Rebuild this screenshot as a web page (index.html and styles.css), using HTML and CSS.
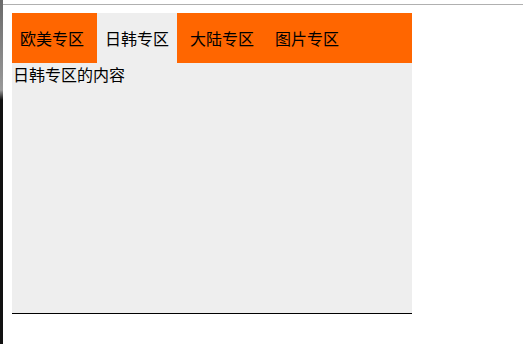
FILE: index.html
```html
<!DOCTYPE html>
<html lang="zh-CN">
<head>
<meta charset="utf-8">
<title>Tabs</title>
<link rel="stylesheet" href="styles.css">
</head>
<body>
<div class="frame">
  <div class="tabs">
    <ul class="tab-list">
      <li class="tab">欧美专区</li>
      <li class="tab active">日韩专区</li>
      <li class="tab">大陆专区</li>
      <li class="tab">图片专区</li>
    </ul>
    <div class="panel">日韩专区的内容</div>
  </div>
</div>
</body>
</html>
```

FILE: styles.css
```css
html {
  height: 100%;
  background:
    linear-gradient(to bottom, #6a6a6a 0, #9a9a9a 90px, #111 100px, #111 100%) left top / 3px 100% no-repeat,
    #fff;
}
body {
  margin: 0;
  padding: 4px 0 0 3px;
  font-family: "Noto Sans CJK SC", "Noto Sans", sans-serif;
  font-size: 16px;
  color: #000;
}
.frame {
  border-top: 1px solid #b0b0b0;
  padding: 8px 0 0 9px;
}
.tabs {
  width: 400px;
}
.tab-list {
  list-style: none;
  margin: 0;
  padding: 0;
  display: flex;
  gap: 5px;
  height: 50px;
  background: #ff6600;
}
.tab {
  padding: 0 8px;
  line-height: 50px;
  height: 50px;
  width: 64px;
  white-space: nowrap;
}
.tab.active {
  background: #eeeeee;
}
.panel {
  height: 250px;
  background: #eeeeee;
  border-bottom: 1px solid #000;
  line-height: 22px;
  padding-left: 1px;
}
```
